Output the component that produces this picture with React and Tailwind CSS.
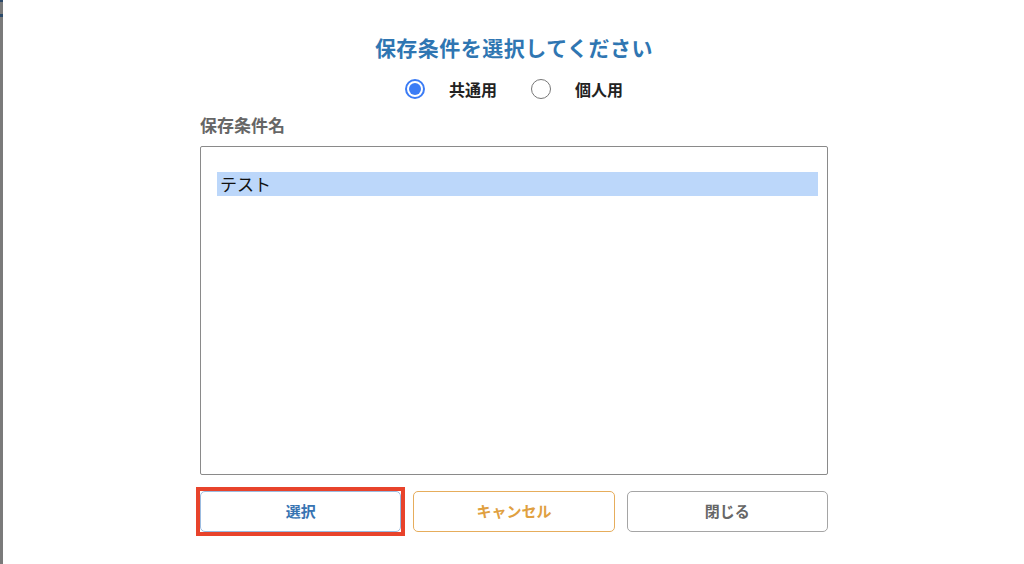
import React, { useState } from 'react';

const font = { fontFamily: '"Noto Sans CJK JP", "Noto Sans", sans-serif' };

function Radio({ checked, label, onClick }) {
  return (
    <button onClick={onClick} className="flex items-center gap-[24px]">
      {checked ? (
        <span className="w-[20px] h-[20px] rounded-full border-2 border-[#3b7cf5] flex items-center justify-center">
          <span className="w-[12px] h-[12px] rounded-full bg-[#3b7cf5]" />
        </span>
      ) : (
        <span className="w-[20px] h-[20px] rounded-full border border-[#777]" />
      )}
      <span className="text-[16px] font-bold text-[#222]">{label}</span>
    </button>
  );
}

export default function App() {
  const [mode, setMode] = useState('common');

  return (
    <div className="w-full h-[564px] flex bg-white" style={font}>
      {/* left edge of underlying window */}
      <div className="w-[3px] h-full bg-[#7a7a7a] flex flex-col">
        <div className="h-[2px] bg-[#2c4a6a]" />
        <div className="h-[12px]" />
        <div className="h-[3px] bg-[#2c4a6a]" />
      </div>

      <div className="flex-1 flex justify-center">
        <div className="w-[628px] ml-[1px] flex flex-col">
          <h1 className="mt-[34px] text-center text-[21px] leading-[26px] font-bold text-[#2f76b2] tracking-[0.5px]">
            保存条件を選択してください
          </h1>

          <div className="mt-[17px] flex justify-center gap-[34px]">
            <Radio checked={mode === 'common'} label="共通用" onClick={() => setMode('common')} />
            <Radio checked={mode === 'personal'} label="個人用" onClick={() => setMode('personal')} />
          </div>

          <div className="mt-[13px] text-[17px] leading-[22px] font-bold text-[#666]">保存条件名</div>

          <div className="mt-[10px] h-[329px] border border-[#8a8a8a] rounded-[2px] pt-[25px] pl-[16px] pr-[9px]">
            <div className="h-[24px] bg-[#bcd7fa] flex items-center text-[17px] text-[#111] pl-[3px]">テスト</div>
          </div>

          <div className="mt-[16px] grid grid-cols-3 gap-[12px]">
            <div className="outline-4 outline-[#e8432b] rounded-none">
              <button className="w-full h-[41px] rounded-[5px] border border-[#9bbbe0] text-[15px] font-bold text-[#3874b2]">
                選択
              </button>
            </div>
            <button className="h-[41px] rounded-[5px] border border-[#e6ad5c] text-[15px] font-bold text-[#e0a040]">
              キャンセル
            </button>
            <button className="h-[41px] rounded-[5px] border border-[#a5a5a5] text-[15px] font-bold text-[#666]">
              閉じる
            </button>
          </div>
        </div>
      </div>
    </div>
  );
}
